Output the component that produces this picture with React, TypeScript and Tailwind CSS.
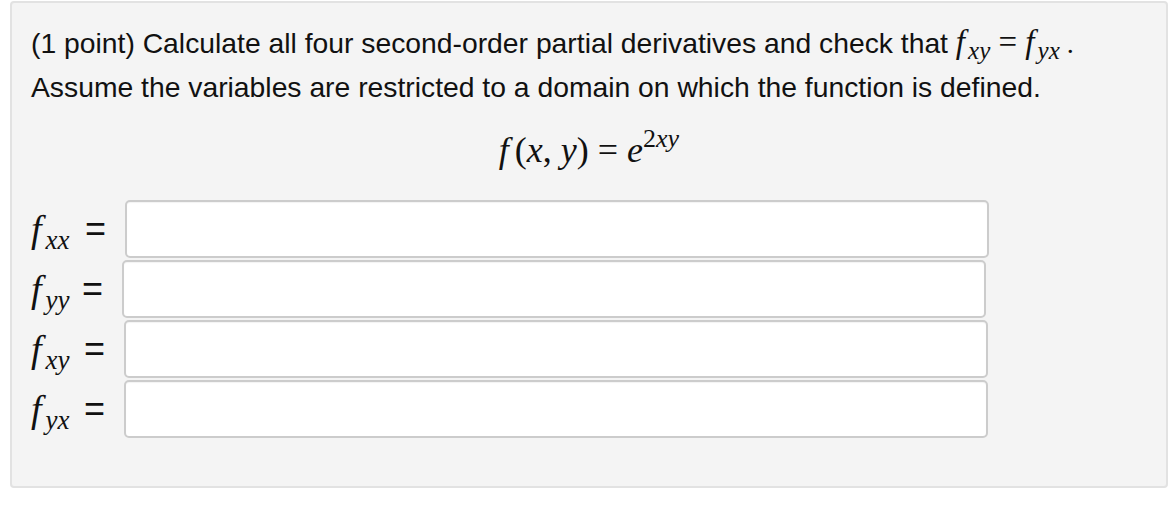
const rows = [
  { sub: 'xx', label: 'w-[94px]' },
  { sub: 'yy', label: 'w-[91px]' },
  { sub: 'xy', label: 'w-[93px]' },
  { sub: 'yx', label: 'w-[93px]' },
];

function F({ sub }: { sub: string }) {
  return (
    <span className="font-['Liberation_Serif',serif] italic">
      <span className="mr-[4px] text-[38px]">f</span>
      <span className="relative top-[7px] text-[27px]">{sub}</span>
    </span>
  );
}

export default function App() {
  return (
    <div className="h-[521px] w-[1171px] bg-white pl-[10px] pt-[1px]">
      <div className="h-[487px] w-[1158px] rounded-[4px] border-2 border-[#e2e2e2] bg-[#f4f4f4] px-[19px] pt-[18px] font-['Liberation_Sans',Arial,sans-serif] text-[28.3px] text-[#111]">
        <p className="whitespace-nowrap leading-[42px]">
          (1 point) Calculate all four second-order partial derivatives and check that{' '}
          <span className="font-['Liberation_Serif',serif] italic">
            <span className="mr-[3px] text-[33px]">f</span>
            <span className="relative top-[6px] text-[25px]">xy</span>
            <span className="not-italic text-[33px]"> = </span>
            <span className="mr-[3px] text-[33px]">f</span>
            <span className="relative top-[6px] text-[25px]">yx</span>
          </span>
          <span className="font-['Liberation_Serif',serif]"> .</span>
        </p>
        <p className="whitespace-nowrap leading-[42px]">Assume the variables are restricted to a domain on which the function is defined.</p>

        <div className="mt-[22px] text-center font-['Liberation_Serif',serif] text-[36px] leading-[40px]">
          <span className="mr-[6px] italic">f</span>(<span className="italic">x</span>, <span className="italic">y</span>) ={' '}
          <span className="italic">e</span>
          <span className="relative top-[-15px] text-[26px]">
            2<span className="italic">xy</span>
          </span>
        </div>

        <div className="mt-[26px] flex flex-col gap-[2px]">
          {rows.map((r) => (
            <div key={r.sub} className="flex h-[58px] items-center">
              <div className={`flex shrink-0 ${r.label} items-center`}>
                <F sub={r.sub} />
                <span className="ml-auto mr-[19px] text-[36px]">=</span>
              </div>
              <input className="h-[58px] w-[864px] shrink-0 rounded-[5px] border-2 border-[#cccccc] bg-white shadow-[inset_0_1px_1px_rgba(0,0,0,0.05)] outline-none" />
            </div>
          ))}
        </div>
      </div>
    </div>
  );
}
